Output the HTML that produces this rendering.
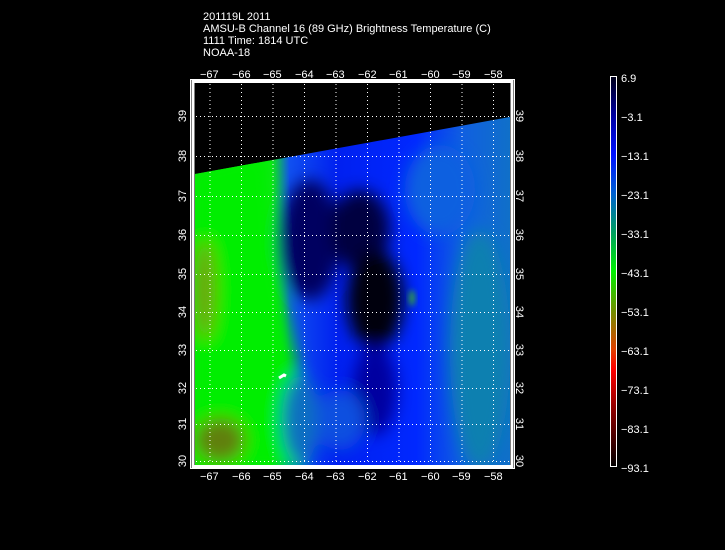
<!DOCTYPE html>
<html><head><meta charset="utf-8"><style>
html,body{margin:0;padding:0;background:#000;}
body{width:725px;height:550px;overflow:hidden;position:relative;font-family:"Liberation Sans",sans-serif;}
.t{position:absolute;color:#fff;font-size:11px;line-height:11px;white-space:nowrap;}
</style></head><body>
<div class="t" style="left:203px;top:12px">201119L 2011</div>
<div class="t" style="left:203px;top:24px">AMSU-B Channel 16 (89 GHz) Brightness Temperature (C)</div>
<div class="t" style="left:203px;top:36px">1111 Time: 1814 UTC</div>
<div class="t" style="left:203px;top:48px">NOAA-18</div>
<svg width="725" height="550" style="position:absolute;left:0;top:0">
<defs>
<filter id="b" x="-50%" y="-50%" width="200%" height="200%"><feGaussianBlur stdDeviation="8"/></filter>
<filter id="b2" x="-50%" y="-50%" width="200%" height="200%"><feGaussianBlur stdDeviation="3"/></filter>
<clipPath id="c"><polygon points="195,174 510,117 510,466 195,466"/></clipPath>
<linearGradient id="cb" x1="0" y1="0" x2="0" y2="1">
<stop offset="0" stop-color="#000018"/><stop offset="0.1" stop-color="#0000a0"/>
<stop offset="0.2" stop-color="#0010ff"/><stop offset="0.3" stop-color="#0060d0"/>
<stop offset="0.4" stop-color="#00a060"/><stop offset="0.5" stop-color="#00f000"/>
<stop offset="0.6" stop-color="#709000"/><stop offset="0.7" stop-color="#e04000"/>
<stop offset="0.75" stop-color="#ff0000"/><stop offset="0.85" stop-color="#900000"/>
<stop offset="1" stop-color="#000000"/></linearGradient>
<linearGradient id="bg" x1="0" y1="0" x2="1" y2="0">
<stop offset="0" stop-color="#10e010"/><stop offset="0.24" stop-color="#10e818"/>
<stop offset="0.3" stop-color="#1050f0"/><stop offset="0.45" stop-color="#0020f0"/>
<stop offset="0.7" stop-color="#0028ff"/><stop offset="0.85" stop-color="#1060e0"/>
<stop offset="1" stop-color="#1070c8"/></linearGradient>
</defs>
<g clip-path="url(#c)">
<rect x="195" y="110" width="316" height="360" fill="url(#bg)"/>
<g filter="url(#b)">
<polygon points="190,170 268,150 275,260 300,380 305,470 190,470" fill="#00ee00"/>
<ellipse cx="220" cy="440" rx="25" ry="22" fill="#608010"/>
<ellipse cx="205" cy="290" rx="10" ry="50" fill="#70a010"/>
<ellipse cx="310" cy="240" rx="30" ry="60" fill="#000060"/>
<ellipse cx="360" cy="230" rx="30" ry="40" fill="#000040"/>
<ellipse cx="375" cy="300" rx="28" ry="50" fill="#000010"/>
<ellipse cx="375" cy="390" rx="22" ry="45" fill="#0000a0"/>
<ellipse cx="300" cy="420" rx="18" ry="45" fill="#1070c0"/>
<ellipse cx="480" cy="350" rx="30" ry="120" fill="#1080b0"/>
<ellipse cx="440" cy="190" rx="35" ry="45" fill="#1060e0"/>
<ellipse cx="340" cy="420" rx="25" ry="30" fill="#1050e0"/>
</g>
<ellipse cx="412" cy="298" rx="3" ry="8" fill="#30a040" filter="url(#b2)"/>
</g>
<path d="M279,378 l5,-3 l2,1" stroke="#fff" stroke-width="3" fill="none"/>
<g stroke="#fff" stroke-width="1" stroke-dasharray="1,3">
<line x1="210" y1="84" x2="210" y2="464"/><line x1="241.5" y1="84" x2="241.5" y2="464"/>
<line x1="273" y1="84" x2="273" y2="464"/><line x1="304.5" y1="84" x2="304.5" y2="464"/>
<line x1="336" y1="84" x2="336" y2="464"/><line x1="367.5" y1="84" x2="367.5" y2="464"/>
<line x1="399" y1="84" x2="399" y2="464"/><line x1="430.5" y1="84" x2="430.5" y2="464"/>
<line x1="462" y1="84" x2="462" y2="464"/><line x1="493.5" y1="84" x2="493.5" y2="464"/>
<line x1="196" y1="116.5" x2="510" y2="116.5"/><line x1="196" y1="156.5" x2="510" y2="156.5"/>
<line x1="196" y1="196.5" x2="510" y2="196.5"/><line x1="196" y1="235.5" x2="510" y2="235.5"/>
<line x1="196" y1="274.5" x2="510" y2="274.5"/><line x1="196" y1="312.5" x2="510" y2="312.5"/>
<line x1="196" y1="350.5" x2="510" y2="350.5"/><line x1="196" y1="388.5" x2="510" y2="388.5"/>
<line x1="196" y1="424.5" x2="510" y2="424.5"/><line x1="196" y1="461.5" x2="510" y2="461.5"/>
</g>
<rect x="193" y="81.5" width="319" height="385" fill="none" stroke="#fff" stroke-width="3"/>
<rect x="190.5" y="79.5" width="324" height="389" fill="none" stroke="#fff" stroke-width="1"/>
<rect x="610.5" y="76.5" width="6" height="390" fill="url(#cb)" stroke="#fff" stroke-width="1"/>
<g fill="#fff" font-family="Liberation Sans" font-size="11">
<text x="200" y="78">−67</text><text x="232" y="78">−66</text><text x="263" y="78">−65</text>
<text x="295" y="78">−64</text><text x="326" y="78">−63</text><text x="358" y="78">−62</text>
<text x="389" y="78">−61</text><text x="421" y="78">−60</text><text x="452" y="78">−59</text><text x="484" y="78">−58</text>
<text x="200" y="480">−67</text><text x="232" y="480">−66</text><text x="263" y="480">−65</text>
<text x="295" y="480">−64</text><text x="326" y="480">−63</text><text x="358" y="480">−62</text>
<text x="389" y="480">−61</text><text x="421" y="480">−60</text><text x="452" y="480">−59</text><text x="484" y="480">−58</text>
<text x="621" y="82">6.9</text><text x="621" y="121">−3.1</text><text x="621" y="160">−13.1</text>
<text x="621" y="199">−23.1</text><text x="621" y="238">−33.1</text><text x="621" y="277">−43.1</text>
<text x="621" y="316">−53.1</text><text x="621" y="355">−63.1</text><text x="621" y="394">−73.1</text>
<text x="621" y="433">−83.1</text><text x="621" y="472">−93.1</text>
</g>
<g fill="#fff" font-family="Liberation Sans" font-size="11">
<text transform="translate(186,116) rotate(-90)" text-anchor="middle">39</text>
<text transform="translate(186,156) rotate(-90)" text-anchor="middle">38</text>
<text transform="translate(186,196) rotate(-90)" text-anchor="middle">37</text>
<text transform="translate(186,235) rotate(-90)" text-anchor="middle">36</text>
<text transform="translate(186,274) rotate(-90)" text-anchor="middle">35</text>
<text transform="translate(186,312) rotate(-90)" text-anchor="middle">34</text>
<text transform="translate(186,350) rotate(-90)" text-anchor="middle">33</text>
<text transform="translate(186,388) rotate(-90)" text-anchor="middle">32</text>
<text transform="translate(186,424) rotate(-90)" text-anchor="middle">31</text>
<text transform="translate(186,461) rotate(-90)" text-anchor="middle">30</text>
<text transform="translate(516,116) rotate(90)" text-anchor="middle">39</text>
<text transform="translate(516,156) rotate(90)" text-anchor="middle">38</text>
<text transform="translate(516,196) rotate(90)" text-anchor="middle">37</text>
<text transform="translate(516,235) rotate(90)" text-anchor="middle">36</text>
<text transform="translate(516,274) rotate(90)" text-anchor="middle">35</text>
<text transform="translate(516,312) rotate(90)" text-anchor="middle">34</text>
<text transform="translate(516,350) rotate(90)" text-anchor="middle">33</text>
<text transform="translate(516,388) rotate(90)" text-anchor="middle">32</text>
<text transform="translate(516,424) rotate(90)" text-anchor="middle">31</text>
<text transform="translate(516,461) rotate(90)" text-anchor="middle">30</text>
</g>
</svg>
</body></html>
